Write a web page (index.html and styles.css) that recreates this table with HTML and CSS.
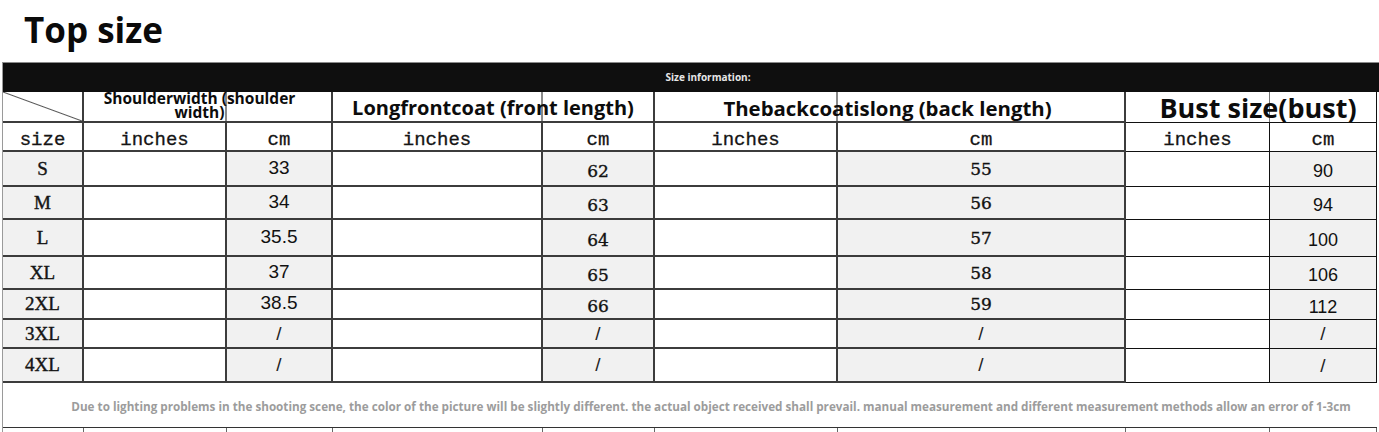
FILE: index.html
```html
<!DOCTYPE html>
<html>
<head>
<meta charset="utf-8">
<link rel="stylesheet" href="styles.css">
</head>
<body>
<div class="title">Top size</div>
<div class="bar">Size information:</div>
<div class="sheet">
  <div class="c h diag"></div>
  <div class="c h span2 hshoulder"><span>Shoulderwidth (shoulder width)</span></div>
  <div class="c h span2 hfront">Longfrontcoat (front length)</div>
  <div class="c h span2 hback">Thebackcoatislong (back length)</div>
  <div class="c h span2 hbust bustcell">Bust size(bust)</div>

  <div class="c sub">size</div>
  <div class="c sub">inches</div>
  <div class="c sub">cm</div>
  <div class="c sub">inches</div>
  <div class="c sub">cm</div>
  <div class="c sub">inches</div>
  <div class="c sub">cm</div>
  <div class="c sub bustcell">inches</div>
  <div class="c sub bustcell">cm</div>

  <div class="c sz r1">S</div><div class="c r1"></div><div class="c g sans r1">33</div><div class="c r1"></div><div class="c g serif low r1">62</div><div class="c r1"></div><div class="c g serif r1">55</div><div class="c bustcell r1"></div><div class="c g bust bustcell r1">90</div>
  <div class="c sz r2">M</div><div class="c r2"></div><div class="c g sans r2">34</div><div class="c r2"></div><div class="c g serif low r2">63</div><div class="c r2"></div><div class="c g serif r2">56</div><div class="c bustcell r2"></div><div class="c g bust bustcell r2">94</div>
  <div class="c sz r3">L</div><div class="c r3"></div><div class="c g sans r3">35.5</div><div class="c r3"></div><div class="c g serif low r3">64</div><div class="c r3"></div><div class="c g serif r3">57</div><div class="c bustcell r3"></div><div class="c g bust bustcell r3">100</div>
  <div class="c sz r4">XL</div><div class="c r4"></div><div class="c g sans r4">37</div><div class="c r4"></div><div class="c g serif low r4">65</div><div class="c r4"></div><div class="c g serif r4">58</div><div class="c bustcell r4"></div><div class="c g bust bustcell r4">106</div>
  <div class="c sz r5">2XL</div><div class="c r5"></div><div class="c g sans r5">38.5</div><div class="c r5"></div><div class="c g serif low r5">66</div><div class="c r5"></div><div class="c g serif r5">59</div><div class="c bustcell r5"></div><div class="c g bust bustcell r5">112</div>
  <div class="c sz r6">3XL</div><div class="c r6"></div><div class="c g slash r6">/</div><div class="c r6"></div><div class="c g slash r6">/</div><div class="c r6"></div><div class="c g slash r6">/</div><div class="c bustcell r6"></div><div class="c g slash bustcell r6">/</div>
  <div class="c sz r7">4XL</div><div class="c r7"></div><div class="c g slash r7">/</div><div class="c r7"></div><div class="c g slash r7">/</div><div class="c r7"></div><div class="c g slash r7">/</div><div class="c bustcell r7"></div><div class="c g slash bustcell r7">/</div>

  <div class="note">Due to lighting problems in the shooting scene, the color of the picture will be slightly different. the actual object received shall prevail. manual measurement and different measurement methods allow an error of 1-3cm</div>

  <div class="t"></div><div class="t"></div><div class="t"></div><div class="t"></div><div class="t"></div><div class="t"></div><div class="t"></div><div class="t"></div><div class="t"></div>
</div>
</body>
</html>
```

FILE: styles.css
```css
html, body {
  margin: 0;
  padding: 0;
  background: #fff;
}
body {
  width: 1379px;
  height: 432px;
  overflow: hidden;
  font-family: "Open Sans", "Liberation Sans", sans-serif;
  color: #111;
}
.title {
  box-sizing: border-box;
  height: 62px;
  padding: 6px 0 0 24px;
  font: 700 35px/48px "Open Sans", sans-serif;
  color: #0a0a0a;
}
.bar {
  box-sizing: border-box;
  height: 30px;
  margin-left: 2px;
  border-top: 1px solid #8a8a8a;
  border-left: 1px solid #9a9a9a;
  background: #0f0f0f;
  color: #e6e6e6;
  font: 700 10px/29px "Open Sans", sans-serif;
  text-align: center;
  padding-left: 34px;
}
.sheet {
  margin-left: 2px;
  border-left: 1px solid #9a9a9a;
  width: 1374px;
  display: grid;
  grid-template-columns: 81px 143px 106px 210px 112px 183px 288px 144px 107px;
  grid-template-rows: 31px 29px 35px 33px 37px 33px 30px 29px 34px 45px 4px;
}
.c {
  box-sizing: border-box;
  border-right: 2px solid #3c3c3c;
  border-bottom: 2px solid #3c3c3c;
  display: flex;
  align-items: center;
  justify-content: center;
  background: #fff;
  white-space: nowrap;
}
.c.bustcell {
  border-right-width: 1px;
  border-bottom-width: 1px;
  border-color: #111;
}
.span2 { grid-column: span 2; }
.h {
  font-weight: 700;
  font-size: 20px;
  color: #0c0c0c;
}
.diag {
  background: linear-gradient(to top right, transparent calc(50% - 1px), #555 50%, transparent calc(50% + 1px));
}
.hshoulder {
  align-items: flex-start;
  font-size: 15.5px;
  line-height: 14px;
  white-space: normal;
  text-align: center;
  background: linear-gradient(to right, transparent 141px, #8a8a8a 141px, #8a8a8a 143px, transparent 143px);
}
.hshoulder span {
  display: block;
  width: 220px;
  margin-top: -1px;
  margin-right: 16px;
}
.hfront {
  padding-top: 2px;
  background: linear-gradient(to right, transparent 208px, #8a8a8a 208px, #8a8a8a 210px, transparent 210px);
}
.hback {
  padding-top: 2px;
  font-size: 20.4px;
  padding-right: 4px;
  background: linear-gradient(to right, transparent 181px, #8a8a8a 181px, #8a8a8a 183px, transparent 183px);
}
.hbust {
  font-size: 27px;
  padding-left: 14px;
  background: linear-gradient(to right, transparent 143px, #777 143px, #777 144px, transparent 144px);
}
.sub {
  font: 400 19px "Liberation Mono", monospace;
  color: #151515;
  padding-top: 6px;
  -webkit-text-stroke: 0.3px #151515;
}
.g { background: #f1f1f1; }
.sz {
  background: #f1f1f1;
  font: 400 19px "Liberation Serif", serif;
  color: #151515;
  -webkit-text-stroke: 0.4px #151515;
}
.sans {
  font: 400 19px "Liberation Sans", sans-serif;
  padding-bottom: 2px;
}
.serif {
  font: 400 17px "DejaVu Serif", serif;
  -webkit-text-stroke: 0.35px #111;
}
.low { padding-top: 4px; }
.bust {
  font: 400 18px "Liberation Sans", sans-serif;
  padding-top: 5px;
}
.slash {
  font: 400 19px "Liberation Sans", sans-serif;
  color: #222;
}
.note {
  grid-column: 1 / -1;
  box-sizing: border-box;
  border-bottom: 1px solid #333;
  display: flex;
  align-items: center;
  justify-content: center;
  padding-left: 42px;
  padding-top: 2px;
  font: 700 11.7px "Open Sans", sans-serif;
  color: #9c9c9c;
  white-space: nowrap;
}
.t {
  box-sizing: border-box;
  border-right: 1px solid #666;
}
```
